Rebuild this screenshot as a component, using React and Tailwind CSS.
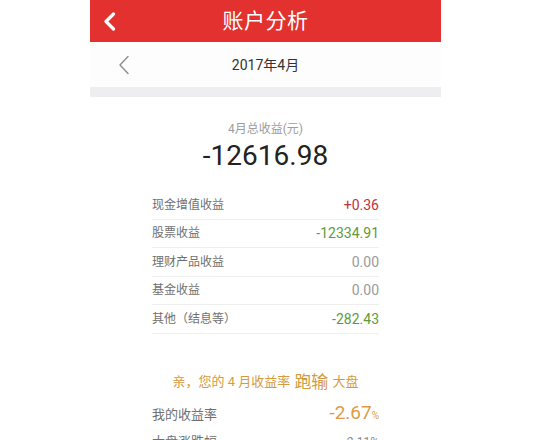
const rows = [
  { label: '现金增值收益', value: '+0.36', color: 'text-[#c4303a]' },
  { label: '股票收益', value: '-12334.91', color: 'text-[#5f9a37]' },
  { label: '理财产品收益', value: '0.00', color: 'text-[#9a9a9a]' },
  { label: '基金收益', value: '0.00', color: 'text-[#9a9a9a]' },
  { label: '其他（结息等）', value: '-282.43', color: 'text-[#5f9a37]' },
];

export default function App() {
  return (
    <div
      className="w-[541px] h-[440px] overflow-hidden bg-white pl-[90px]"
      style={{ fontFamily: "Roboto, 'Noto Sans CJK SC', sans-serif" }}
    >
      <div className="w-[351px] h-full flex flex-col">
        {/* title bar */}
        <div className="relative h-[42px] bg-[#e2312f] flex items-center justify-center shrink-0">
          <svg
            className="absolute left-[13px] top-[12px]"
            width="13"
            height="19"
            viewBox="0 0 13 19"
            fill="none"
          >
            <path d="M10.5 2 L3 9.5 L10.5 17" stroke="white" strokeWidth="3.2" strokeLinecap="round" strokeLinejoin="round" />
          </svg>
          <span className="text-white text-[21px] leading-[28px] tracking-[0.5px]">账户分析</span>
        </div>

        {/* month switcher */}
        <div className="relative h-[45px] bg-[#fdfdfd] flex items-center justify-center shrink-0">
          <svg
            className="absolute left-[28px] top-[13px]"
            width="12"
            height="20"
            viewBox="0 0 12 20"
            fill="none"
          >
            <path d="M10 1.5 L2 10 L10 18.5" stroke="#8e8e8e" strokeWidth="1.4" strokeLinecap="round" strokeLinejoin="round" />
          </svg>
          <span className="text-[14px] leading-[18px] text-[#333]">2017年4月</span>
        </div>
        <div className="h-[10px] bg-[#eeeef0] shrink-0" />

        {/* total */}
        <div className="flex flex-col items-center pt-[24px]">
          <span className="text-[12px] leading-[16px] text-[#9c9c9c]">4月总收益(元)</span>
          <span className="text-[28px] leading-[34px] mt-[2px] text-[#222]">-12616.98</span>
        </div>

        {/* breakdown */}
        <div className="px-[62px] mt-[18px] flex flex-col">
          {rows.map((r) => (
            <div
              key={r.label}
              className="h-[28.5px] flex items-center justify-between border-b border-[#efefef]"
            >
              <span className="text-[12px] leading-[16px] text-[#707070]">{r.label}</span>
              <span className={`text-[14px] leading-[18px] ${r.color}`}>{r.value}</span>
            </div>
          ))}
        </div>

        {/* compare */}
        <div className="mt-[38px] flex items-center justify-center gap-[4px] text-[13px] leading-[20px] text-[#d59a3e]">
          <span>亲，您的 4 月收益率</span>
          <span className="text-[17px]">跑输</span>
          <span>大盘</span>
        </div>
        <div className="px-[62px] mt-[9px] flex flex-col">
          <div className="h-[28px] flex items-center justify-between">
            <span className="text-[13px] leading-[18px] text-[#707070]">我的收益率</span>
            <span className="text-[#dc9c45] leading-[24px]">
              <span className="text-[19px]">-2.67</span>
              <span className="text-[10px]">%</span>
            </span>
          </div>
          <div className="h-[26px] flex items-center justify-between">
            <span className="text-[13px] leading-[18px] text-[#707070]">大盘涨跌幅</span>
            <span className="text-[12px] leading-[16px] text-[#8a8a8a]">-2.11%</span>
          </div>
        </div>
      </div>
    </div>
  );
}
